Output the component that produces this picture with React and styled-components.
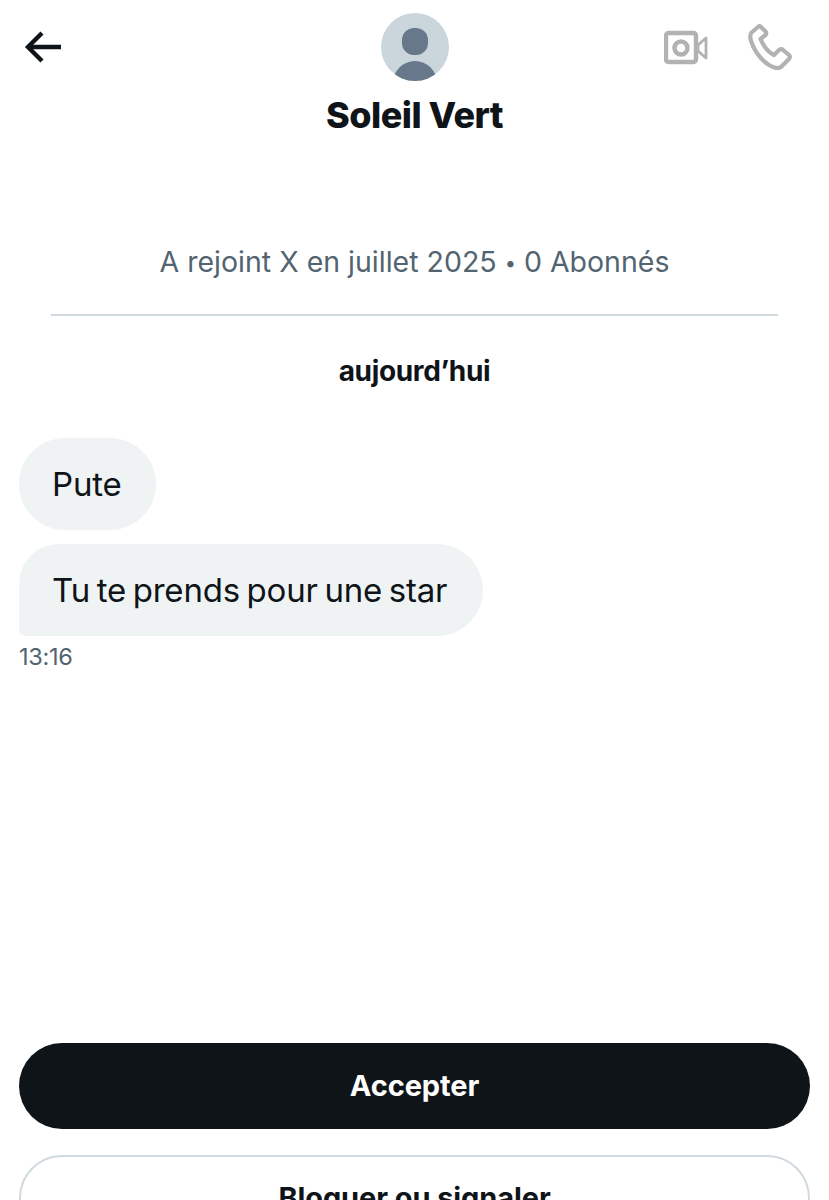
import React from 'react'
import styled, { createGlobalStyle } from 'styled-components'

const GlobalStyle = createGlobalStyle`
  html, body {
    margin: 0;
    padding: 0;
    background: #fff;
  }
  body {
    font-family: Inter, "Liberation Sans", sans-serif;
    color: #0f1419;
  }
`

const Screen = styled.div`
  width: 829px;
  height: 1200px;
  overflow: hidden;
  display: flex;
  flex-direction: column;
  box-sizing: border-box;
  padding: 13px 19px 0;
`

const Header = styled.header`
  display: grid;
  grid-template-columns: 1fr auto 1fr;
  align-items: start;
`

const BackButton = styled.div`
  padding: 14px 0 0 4px;
  line-height: 0;
`

const Profile = styled.div`
  display: flex;
  flex-direction: column;
  align-items: center;
`

const Avatar = styled.svg`
  width: 68px;
  height: 68px;
  display: block;
`

const Name = styled.h1`
  margin: 13px 0 0;
  font-size: 36px;
  line-height: 42px;
  font-weight: 800;
  letter-spacing: -0.5px;
  color: #0f1419;
`

const Actions = styled.div`
  display: flex;
  justify-content: flex-end;
  align-items: center;
  gap: 40px;
  padding: 11px 18px 0 0;
  line-height: 0;
`

const Joined = styled.p`
  margin: 108px 0 0;
  text-align: center;
  font-size: 28.5px;
  line-height: 36px;
  color: #536471;
`

const Dot = styled.span`
  font-size: 20px;
  vertical-align: 2px;
`

const Divider = styled.hr`
  width: 727px;
  margin: 33px 0 0 32px;
  border: 0;
  height: 2px;
  background: #cfd9de;
`

const DayLabel = styled.div`
  margin-top: 38px;
  text-align: center;
  font-size: 28px;
  line-height: 34px;
  font-weight: 700;
  letter-spacing: -0.35px;
`

const Messages = styled.div`
  display: flex;
  flex-direction: column;
  align-items: flex-start;
  gap: 14px;
  margin-top: 50px;
`

const Bubble = styled.div`
  height: 92px;
  box-sizing: border-box;
  padding: 0 ${(p) => (p.$last ? '36px' : '34px')} 0 33px;
  display: flex;
  align-items: center;
  background: #eff3f4;
  border-radius: ${(p) => (p.$last ? '40px 46px 46px 6px' : '46px')};
  font-size: 33px;
  letter-spacing: -0.2px;
  word-spacing: -2.4px;
  color: #0f1419;
`

const Time = styled.time`
  margin-top: 6px;
  font-size: 23.5px;
  line-height: 30px;
  letter-spacing: -0.3px;
  color: #536471;
`

const Footer = styled.div`
  margin-top: auto;
  display: flex;
  flex-direction: column;
  gap: 26px;
  height: 157px;
`

const Button = styled.div`
  flex: none;
  height: 86px;
  box-sizing: border-box;
  padding-bottom: 2px;
  display: flex;
  align-items: center;
  justify-content: center;
  border-radius: 43px;
  font-size: 29px;
  font-weight: 700;
  letter-spacing: -0.1px;
  background: ${(p) => (p.$outline ? '#fff' : '#0f1419')};
  color: ${(p) => (p.$outline ? '#0f1419' : '#fff')};
  border: ${(p) => (p.$outline ? '2px solid #cfd9de' : '0')};
`

export default function App() {
  return (
    <>
      <GlobalStyle />
      <Screen>
        <Header>
          <BackButton>
            <svg width="40" height="40" viewBox="0 0 40 40" fill="none" stroke="#0f1419" strokeWidth="4.4">
              <path d="M38 20H5" />
              <path d="M19 6 5 20l14 14" />
            </svg>
          </BackButton>
          <Profile>
            <Avatar viewBox="0 0 68 68">
              <defs>
                <clipPath id="avatarClip">
                  <circle cx="34" cy="34" r="34" />
                </clipPath>
              </defs>
              <g clipPath="url(#avatarClip)">
                <rect width="68" height="68" fill="#cbd5dc" />
                <rect x="21" y="15" width="26" height="27" rx="12" fill="#66788a" />
                <ellipse cx="34" cy="70" rx="22" ry="22" fill="#66788a" />
              </g>
            </Avatar>
            <Name>Soleil Vert</Name>
          </Profile>
          <Actions>
            <svg width="44" height="37" viewBox="0 0 44 37" fill="none" stroke="#b2b2b2" strokeWidth="4.4">
              <rect x="2" y="4" width="30" height="29" rx="2.500" />
              <circle cx="17" cy="19" r="6.500" />
              <path d="M34 16 42 9v20l-8-7z" strokeWidth="2.800" strokeLinejoin="round" />
            </svg>
            <svg width="44" height="46" viewBox="0 0 44 46" fill="none" stroke="#b2b2b2" strokeWidth="4.200" strokeLinejoin="round">
              <path d="M10 3 3.500 8.500C2 10 2 13 3 17c3 9 9 18 18 24 4 2.500 9 4 12 2l8-8c1-1.500 1-3 0-4l-6-5c-1-1-2.500-1-4 0l-5 5C20 28 15 21 12.500 15l5-4c1-1 1-2.500 0-3.500L13 3c-1-1-2-1-3 0z" />
            </svg>
          </Actions>
        </Header>
        <Joined>A rejoint X en juillet 2025 <Dot>•</Dot> 0 Abonnés</Joined>
        <Divider />
        <DayLabel>aujourd’hui</DayLabel>
        <Messages>
          <Bubble>Pute</Bubble>
          <Bubble $last>Tu te prends pour une star</Bubble>
        </Messages>
        <Time>13:16</Time>
        <Footer>
          <Button>Accepter</Button>
          <Button $outline>Bloquer ou signaler</Button>
        </Footer>
      </Screen>
    </>
  )
}
